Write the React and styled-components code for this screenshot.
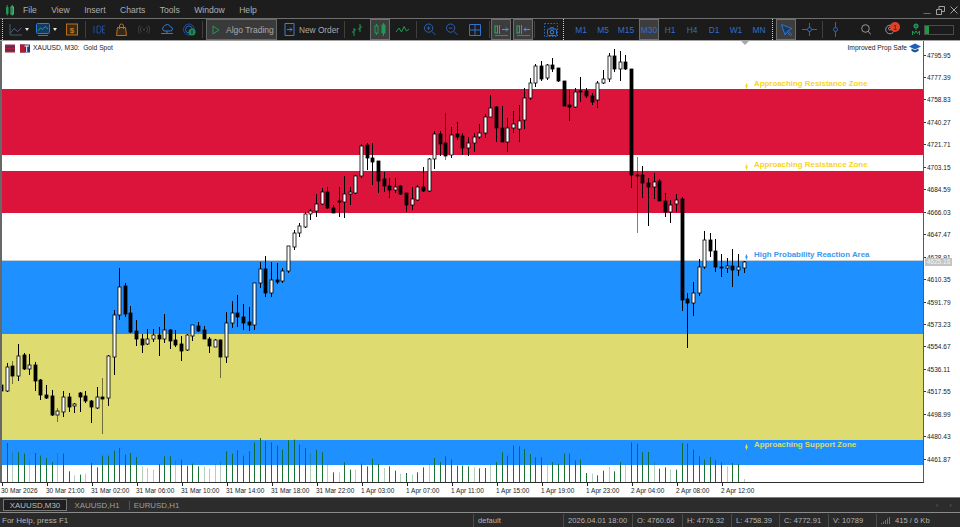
import styled, { createGlobalStyle } from 'styled-components'

const GlobalStyle = createGlobalStyle`
  html, body {
    margin: 0;
    padding: 0;
    overflow: hidden;
    background: #1d1d1d;
  }
`

const Page = styled.div`
  display: flex;
  flex-direction: column;
  width: 960px;
  height: 527px;
  overflow: hidden;
  background: #1d1d1d;
  font-family: "Liberation Sans", Arial, sans-serif;
`

/* ---- menu ---- */

const MenuBar = styled.div`
  display: flex;
  align-items: center;
  height: 18px;
  padding: 2px 0 0 5px;
  box-sizing: border-box;
  color: #aeaeae;
  font-size: 8.6px;
`

const MenuItems = styled.div`
  display: flex;
  gap: 14.4px;
  margin-left: 8px;
`

const WindowButtons = styled.div`
  display: flex;
  align-items: center;
  gap: 5px;
  margin-left: auto;
  padding-right: 2px;
`

/* ---- toolbar ---- */

const Toolbar = styled.div`
  display: flex;
  align-items: center;
  height: 21px;
  border-top: 1px solid #707070;
  border-bottom: 1px solid #a2a2a2;
  background: #1b1b1b;
`

const Slot = styled.div`
  position: relative;
  display: flex;
  flex: none;
  align-items: center;
  justify-content: center;
  box-sizing: border-box;
  width: ${p => p.$w}px;
  height: 21px;
  margin-left: ${p => p.$ml || 0}px;
  background: ${p => (p.$on ? '#3d3d3d' : 'transparent')};
  box-shadow: ${p => (p.$on ? 'inset 0 0 0 1px #6c6c6c' : 'none')};
`

const Divider = styled.div`
  flex: none;
  width: 1px;
  height: 17px;
  margin-left: ${p => p.$ml}px;
  background: #3f3f3f;
`

const Grip = styled.div`
  flex: none;
  width: 0;
  height: 21px;
  margin-left: ${p => p.$ml}px;
  border-left: 1px dotted #d0d0d0;
`

const Caret = styled.div`
  flex: none;
  width: 0;
  height: 0;
  margin-left: ${p => p.$ml}px;
  margin-right: 0;
  border-top: 3px solid #e2e2e2;
  border-left: 2.5px solid transparent;
  border-right: 2.5px solid transparent;
`

const AlgoButton = styled.div`
  display: flex;
  flex: none;
  align-items: center;
  gap: 6px;
  box-sizing: border-box;
  width: 71px;
  height: 21px;
  margin-left: 3px;
  padding-left: 6px;
  background: #3a3a3a;
  box-shadow: inset 0 0 0 1px #666;
  color: #a9a9a9;
  font-size: 8.5px;
  white-space: nowrap;
`

const OrderButton = styled.div`
  display: flex;
  flex: none;
  align-items: center;
  gap: 4px;
  width: 61px;
  margin-left: 4px;
  padding-left: 3px;
  box-sizing: border-box;
  color: #a9a9a9;
  font-size: 8.3px;
  white-space: nowrap;
`

const Period = styled(Slot)`
  color: #2f6fcf;
  font-size: 8.4px;
`

const Badge = styled.div`
  position: absolute;
  top: 3px;
  right: -3px;
  display: flex;
  align-items: center;
  justify-content: center;
  width: 10px;
  height: 10px;
  border-radius: 50%;
  background: #e0412a;
  color: #1b1b1b;
  font-size: 7px;
`

const Meter = styled.div`
  flex: none;
  box-sizing: border-box;
  width: 30px;
  height: 10px;
  margin-left: 4px;
  border: 1px solid #4b4b4b;
  background: linear-gradient(to right, #1f9a44 4px, #1b1b1b 4px);
`

/* ---- chart ---- */

const Workspace = styled.div`
  display: flex;
  height: 456px;
  background: #fff;
`

const ChartColumn = styled.div`
  display: flex;
  flex: none;
  flex-direction: column;
  width: 924px;
`

const Plot = styled.div`
  position: relative;
  display: flex;
  flex-direction: column;
  box-sizing: content-box;
  width: 921px;
  height: 441px;
  border-left: 2px solid #686868;
  border-right: 1px solid #5a5a5a;
  border-bottom: 1px solid #2e2e2e;
  overflow: hidden;
`

const Band = styled.div`
  flex: none;
  height: ${p => p.$h}px;
  background: ${p => p.$color};
`

const ChartLayer = styled.svg`
  position: absolute;
  top: 0;
  left: 0;
`

const BidLine = styled.div`
  position: absolute;
  top: 219px;
  left: 0;
  right: 0;
  height: 1px;
  background: #c6ced6;
`

const ChartInfo = styled.div`
  position: absolute;
  top: 2px;
  left: 3px;
  display: flex;
  align-items: center;
  gap: 3px;
  color: #1a1a1a;
  font-size: 6.7px;
  line-height: 10px;
  white-space: pre;
`

const PropSafe = styled.div`
  position: absolute;
  top: 2px;
  right: 2px;
  display: flex;
  align-items: center;
  gap: 2px;
  color: #1a1a1a;
  font-size: 6.7px;
  line-height: 10px;
`

const ShiftMark = styled.div`
  position: absolute;
  top: 0;
  left: 739px;
  width: 0;
  height: 0;
  border-top: 4px solid #a8a8a8;
  border-left: 4px solid transparent;
  border-right: 4px solid transparent;
`

const ZoneLabel = styled.div`
  position: absolute;
  top: ${p => p.$top}px;
  left: 742px;
  display: flex;
  align-items: center;
  gap: 5px;
  color: ${p => p.$color};
  font-size: 7.9px;
  font-weight: 700;
  line-height: 10px;
  white-space: nowrap;
`

const TimeAxis = styled.div`
  display: flex;
  height: 14px;
  padding-left: 1px;
  box-sizing: border-box;
`

const TimeLabel = styled.div`
  position: relative;
  flex: none;
  width: 45px;
  padding-top: 4px;
  color: #1a1a1a;
  font-size: 6.5px;
  line-height: 8px;
  white-space: nowrap;

  &::before {
    content: '';
    position: absolute;
    top: 0;
    left: 1px;
    width: 1px;
    height: 3px;
    background: #222;
  }
`

const PriceAxis = styled.div`
  position: relative;
  display: flex;
  flex: 1;
  flex-direction: column;
  padding-top: 2.8px;
  box-sizing: border-box;
`

const PriceRow = styled.div`
  display: flex;
  flex: none;
  align-items: center;
  gap: 1px;
  height: 22.46px;
  color: #1a1a1a;
  font-size: 6.5px;

  &::before {
    content: '';
    width: 2px;
    height: 1px;
    background: #333;
  }
`

const PriceTag = styled.div`
  position: absolute;
  top: 217px;
  left: 1px;
  width: 27px;
  height: 8px;
  background: #c3c3c3;
  color: #f4f4f4;
  font-size: 6.5px;
  line-height: 8px;
  text-align: center;
`

/* ---- bottom bars ---- */

const TabBar = styled.div`
  display: flex;
  align-items: center;
  height: 14px;
  border-top: 1px solid #7d7d7d;
  background: #2c2c2c;
  color: #9f9f9f;
  font-size: 7.9px;
`

const Tab = styled.div`
  display: flex;
  flex: none;
  align-items: center;
  justify-content: center;
  box-sizing: border-box;
  width: ${p => p.$w}px;
  height: ${p => (p.$active ? 12 : 9)}px;
  margin-left: ${p => p.$ml}px;
  background: ${p => (p.$active ? '#1e1e1e' : 'transparent')};
  border: ${p => (p.$active ? '1px solid #777' : 'none')};
  color: ${p => (p.$active ? '#bdbdbd' : '#9f9f9f')};
`

const TabSeparator = styled.div`
  flex: none;
  width: 1px;
  height: 9px;
  margin-left: 2px;
  background: #555;
`

const TabArrows = styled.div`
  display: flex;
  gap: 11px;
  margin-left: auto;
  padding-right: 8px;
  color: #5d5d5d;
  font-size: 8px;
`

const StatusBar = styled.div`
  display: flex;
  align-items: center;
  height: 14px;
  border-top: 1px solid #8a8a8a;
  background: #2a2a2a;
  color: #b4b4b4;
  font-size: 7.6px;
`

const HelpText = styled.div`
  flex: none;
  width: 471px;
  padding-left: 2px;
  font-size: 8px;
`

const StatusCell = styled.div`
  display: flex;
  flex: none;
  align-items: center;
  gap: 4px;
  box-sizing: border-box;
  width: ${p => p.$w}px;
  height: 13px;
  padding-left: 4px;
  border-left: 1px solid #4c4c4c;
  white-space: nowrap;
`

/* ---- icons ---- */

const BLUE = '#2b67bd'
const GREEN = '#1f9a55'
const ORANGE = '#b96f1d'

const Icon = ({ w = 13, h = 13, children }) => (
  <svg width={w} height={h} viewBox={`0 0 ${w} ${h}`} fill="none">
    {children}
  </svg>
)

const LineChartIcon = () => (
  <Icon>
    <path d="M1 1V12H13" stroke="#4c5a6e" />
    <path d="M1.5 10L5 5.5L8.5 8.5L12.5 5" stroke="#56637a" />
  </Icon>
)

const ProfileIcon = () => (
  <Icon w={14} h={13}>
    <rect x=".5" y=".5" width="13" height="10" rx="1" stroke="#2f7ad6" fill="#123a68" />
    <path d="M2 8L4.5 5L6.5 6.5L9 3.5L12 6" stroke="#25a05a" />
    <path d="M2 12.5H12" stroke="#2f7ad6" />
  </Icon>
)

const DollarIcon = () => (
  <Icon w={12} h={13}>
    <rect x=".5" y="1" width="11" height="11" fill="#3d2a12" stroke={ORANGE} />
    <text x="6" y="9.8" fontSize="8" fontWeight="700" fill="#c9791f" textAnchor="middle" fontFamily="Liberation Sans">$</text>
  </Icon>
)

const BagIcon = () => (
  <Icon w={11} h={13}>
    <path d="M1.5 4.5H9.5L10.5 12.5H.5Z" stroke={ORANGE} fill="#3a2812" />
    <path d="M3.5 6V3A2 2 0 0 1 7.5 3V6" stroke={ORANGE} />
  </Icon>
)

const BroadcastIcon = () => (
  <Icon>
    <circle cx="6.5" cy="6.5" r="1" fill="#4a4a4a" />
    <path d="M4 3.5A4 4 0 0 0 4 9.5M9 3.5A4 4 0 0 1 9 9.5M2 2A6.5 6.5 0 0 0 2 11M11 2A6.5 6.5 0 0 1 11 11" stroke="#484848" />
  </Icon>
)

const CloudIcon = () => (
  <Icon w={14} h={13}>
    <path d="M4 8A2.5 2.5 0 0 1 4 3.5A3.5 3.5 0 0 1 10.5 4A2 2 0 0 1 10.5 8Z" stroke="#2f7ad6" />
    <path d="M1 10.5H13M7 8V10.5" stroke="#2f7ad6" />
  </Icon>
)

const SignalsIcon = () => (
  <Icon>
    <circle cx="6" cy="6.5" r="5.5" stroke="#1d4e94" />
    <circle cx="6" cy="6.5" r="3.5" stroke="#2b67bd" />
    <circle cx="9" cy="9" r="3.5" fill="#1f8a55" />
    <path d="M9 7V11" stroke="#0c2c1c" />
  </Icon>
)

const PlayIcon = () => (
  <Icon w={8} h={10}>
    <path d="M1 1L7 5L1 9Z" stroke="#1f9a55" />
  </Icon>
)

const OrderIcon = () => (
  <Icon w={11} h={13}>
    <path d="M1 .5H10V12.5H1ZM3 6.5H8M6 4.5L8 6.5L6 8.5" stroke="#3f7fd2" />
  </Icon>
)

const BarsIcon = () => (
  <Icon>
    <path d="M3 5V13M1 9H3M3 7H5M9 1V9M7 6H9M9 4H11" stroke={GREEN} />
  </Icon>
)

const CandlesIcon = () => (
  <Icon>
    <rect x="1" y="3" width="3" height="7" stroke={GREEN} />
    <path d="M2.5 1V3M2.5 10V12" stroke={GREEN} />
    <rect x="8" y="2" width="3" height="8" stroke={GREEN} fill={GREEN} />
    <path d="M9.5 0V2M9.5 10V13" stroke={GREEN} />
  </Icon>
)

const ZigzagIcon = () => (
  <Icon h={9}>
    <path d="M0 7L3 3L5.5 7L8 1.5L10.5 6L13 4" stroke={GREEN} />
  </Icon>
)

const ZoomIcon = ({ plus }) => (
  <Icon>
    <circle cx="5" cy="5" r="4.5" stroke={BLUE} />
    <path d="M8.5 8.5L12.5 12.5M3 5H7" stroke={BLUE} />
    {plus && <path d="M5 3V7" stroke={BLUE} />}
  </Icon>
)

const GridIcon = () => (
  <Icon w={12} h={12}>
    <path d="M.5 .5H11.5V11.5H.5ZM6 .5V11.5M.5 6H11.5" stroke="#2f73cf" />
  </Icon>
)

const AutoScrollIcon = ({ back }) => (
  <Icon w={15} h={12}>
    <rect x="1" y="2" width="2.5" height="7" stroke="#25b066" />
    <path d="M5.5 1V10" stroke="#25b066" />
    <path
      d={back ? 'M14 5.5H8M10 3.5L8 5.5L10 7.5' : 'M8 5.5H14M12 3.5L14 5.5L12 7.5'}
      stroke="#4a93ea"
    />
    <path d="M1 11.5H14" stroke="#6d6d6d" />
  </Icon>
)

const CameraIcon = () => (
  <Icon w={14} h={14}>
    <path d="M.5 .5H13.5V13.5H.5Z" stroke={BLUE} strokeDasharray="1.5 1.5" />
    <rect x="3.5" y="6" width="9" height="6.5" rx="1" stroke="#2f73cf" />
    <path d="M6 6L6.8 4.5H9.2L10 6" stroke="#2f73cf" />
    <circle cx="8" cy="9.2" r="1.8" stroke="#3f86dd" />
  </Icon>
)

const CursorIcon = () => (
  <Icon>
    <path d="M1.5 1.5L12 5.5L8 7.5L11.5 11.5L10 12.5L7 8.5L5 12Z" stroke="#2f73cf" fill="#123a68" />
  </Icon>
)

const CrosshairIcon = () => (
  <Icon w={15} h={13}>
    <path d="M0 6.5H15M7.5 0V13" stroke={BLUE} />
    <circle cx="7.5" cy="6.5" r="2" fill="#1b1b1b" stroke={BLUE} />
  </Icon>
)

const VerticalIcon = () => (
  <Icon w={7} h={15}>
    <path d="M3.5 0V15" stroke={BLUE} />
    <circle cx="3.5" cy="7.5" r="2" fill="#1b1b1b" stroke={BLUE} />
  </Icon>
)

const SearchIcon = () => (
  <Icon w={10} h={11}>
    <circle cx="4.5" cy="4.5" r="3.8" stroke="#9a9a9a" />
    <path d="M7.2 7.2L9.8 10.5" stroke="#9a9a9a" />
  </Icon>
)

const ChatIcon = () => (
  <Icon w={10} h={11}>
    <circle cx="5" cy="5.5" r="4.3" stroke="#9a9a9a" />
    <circle cx="5" cy="4.5" r="1.5" stroke="#9a9a9a" />
  </Icon>
)

const VpsIcon = () => (
  <svg width="8" height="13" viewBox="0 0 8 13" fill="none">
    <circle cx="4" cy="3" r="2.5" fill="#1f9a55" />
    <circle cx="4" cy="3" r=".8" fill="#1b1b1b" />
    <path d="M4 5.5V7M.5 12V8L2.5 10.5L4 8L5.5 10.5L7.5 8V12" stroke="#1f9a55" />
  </svg>
)

const AppLogo = () => (
  <Icon w={10} h={12}>
    <rect x="1" y="3" width="2.5" height="7" fill="#1f9a55" />
    <path d="M2.2 1V11.5" stroke="#1f9a55" />
    <rect x="6" y="3" width="2.5" height="7" stroke="#34c06e" />
    <path d="M7.2 1V11.5" stroke="#34c06e" />
  </Icon>
)

const Minimize = () => (
  <Icon w={8} h={8}>
    <path d="M.5 7.5H7.5" stroke="#6d6d6d" />
  </Icon>
)

const Restore = () => (
  <Icon w={9} h={9}>
    <path d="M3 3V.5H8.5V5.5H6M.5 3.5H5.5V8.5H.5Z" stroke="#a0a0a0" />
  </Icon>
)

const Close = () => (
  <Icon w={8} h={8}>
    <path d="M.5 .5L7.5 7.5M7.5 .5L.5 7.5" stroke="#a0a0a0" />
  </Icon>
)

const FlagIcons = () => (
  <svg width="25" height="9" viewBox="0 0 25 9" style={{ flex: 'none' }}>
    <rect width="10" height="8" y=".5" fill="#b31b34" />
    <path d="M0 3H10M0 6H10" stroke="#1b3a78" strokeWidth="1.2" />
    <rect x="15" y=".5" width="10" height="8" fill="#1b3a78" />
    <rect x="15" y=".5" width="5" height="8" fill="#b31b34" />
    <path d="M19.5 2H24M21.7 2V8" stroke="#fff" />
  </svg>
)

const GradCap = () => (
  <svg width="12" height="10" viewBox="0 0 12 10">
    <path d="M6 .5L12 3.5L6 6.5L0 3.5Z" fill="#1f5fb4" />
    <path d="M2.5 5.5V8L6 9.5L9.5 8V5.5L6 7.2Z" fill="#1a4f96" />
  </svg>
)

const SignalBars = () => (
  <svg width="10" height="9" viewBox="0 0 10 9">
    <path d="M.5 8V7M2.5 8V5.5M4.5 8V4M6.5 8V2.5M8.5 8V1" stroke="#1fa65a" />
  </svg>
)

const ZoneArrow = ({ color }) => (
  <svg width="5" height="6" viewBox="0 0 5 6" style={{ marginTop: 4 }}>
    <path d="M2.5 .5V5.5M1 3H4" stroke={color} strokeWidth="1.2" />
  </svg>
)

/* ---- data, in screen pixels read off the picture ---- */

const BANDS = [
  [48, '#ffffff'],
  [66, '#dc143c'],
  [16, '#ffffff'],
  [42, '#dc143c'],
  [48, '#ffffff'],
  [73, '#1e90ff'],
  [106, '#dedb70'],
  [25, '#1e90ff'],
  [17, '#ffffff'],
]

// wick top, body top, body bottom, wick bottom, 1 = white candle
const CANDLES = [
  [385, 385, 391, 391, 0], [363, 367, 391, 392, 1], [361, 366, 376, 384, 0], [344, 356, 376, 381, 1],
  [353, 355, 369, 370, 0], [354, 365, 369, 375, 1], [362, 365, 381, 391, 0], [379, 380, 395, 400, 0],
  [385, 395, 398, 399, 0], [390, 396, 415, 416, 0], [408, 411, 415, 422, 1], [391, 397, 412, 417, 1],
  [393, 397, 407, 412, 0], [403, 404, 406, 413, 1], [392, 393, 397, 412, 0], [391, 396, 401, 403, 0],
  [400, 401, 407, 423, 0], [387, 397, 408, 409, 1], [378, 397, 399, 434, 0], [355, 356, 398, 406, 1],
  [310, 315, 357, 375, 1], [268, 287, 315, 320, 1], [283, 286, 314, 317, 0], [306, 313, 332, 333, 0],
  [320, 331, 339, 346, 0], [334, 339, 345, 353, 0], [329, 339, 344, 345, 1], [329, 335, 339, 342, 1],
  [327, 335, 339, 356, 0], [314, 330, 339, 343, 1], [329, 330, 341, 349, 0], [330, 340, 345, 347, 0],
  [336, 344, 351, 361, 0], [334, 335, 350, 351, 1], [325, 325, 336, 341, 1], [322, 326, 331, 332, 0],
  [326, 330, 339, 339, 0], [337, 339, 346, 353, 0], [339, 340, 347, 347, 1], [339, 340, 357, 378, 0],
  [312, 323, 357, 363, 1], [301, 313, 323, 328, 1], [295, 313, 317, 327, 0], [304, 317, 323, 330, 0],
  [307, 322, 325, 331, 0], [283, 283, 325, 330, 1], [262, 269, 283, 288, 1], [256, 269, 293, 297, 0],
  [262, 280, 293, 297, 1], [263, 280, 282, 284, 0], [268, 271, 281, 283, 1], [246, 246, 271, 273, 1],
  [230, 233, 247, 250, 1], [223, 226, 233, 237, 1], [212, 214, 227, 228, 1], [209, 211, 214, 220, 1],
  [194, 204, 211, 217, 1], [188, 192, 204, 205, 1], [187, 192, 208, 209, 0], [205, 208, 213, 213, 0],
  [187, 201, 202, 217, 0], [176, 194, 202, 218, 1], [187, 192, 194, 205, 1], [175, 176, 193, 194, 1],
  [144, 146, 176, 178, 1], [143, 145, 158, 170, 0], [143, 158, 162, 185, 0], [161, 161, 181, 193, 0],
  [172, 179, 186, 192, 0], [178, 186, 190, 198, 0], [178, 187, 190, 193, 1], [185, 186, 194, 195, 0],
  [193, 193, 205, 212, 0], [187, 199, 205, 210, 1], [185, 187, 200, 201, 1], [167, 187, 191, 192, 0],
  [158, 159, 191, 192, 1], [131, 134, 159, 169, 1], [131, 134, 144, 156, 0], [113, 143, 156, 160, 0],
  [127, 135, 155, 158, 1], [122, 134, 137, 140, 0], [133, 136, 148, 155, 0], [137, 143, 148, 156, 1],
  [133, 137, 143, 152, 1], [124, 133, 137, 139, 1], [114, 117, 133, 138, 1], [95, 108, 117, 117, 1],
  [106, 107, 128, 142, 0], [106, 128, 142, 142, 0], [118, 128, 142, 152, 1], [111, 124, 128, 133, 1],
  [105, 121, 129, 142, 1], [88, 98, 120, 129, 1], [78, 83, 98, 100, 1], [64, 66, 83, 87, 1],
  [61, 66, 79, 81, 0], [64, 65, 78, 80, 1], [58, 65, 69, 72, 0], [68, 68, 81, 82, 0],
  [81, 81, 106, 106, 0], [90, 105, 107, 121, 0], [88, 92, 107, 108, 1], [77, 91, 92, 102, 0],
  [88, 91, 96, 98, 0], [93, 96, 102, 105, 0], [81, 83, 100, 108, 1], [70, 79, 83, 84, 1],
  [53, 56, 79, 82, 1], [49, 56, 69, 72, 0], [51, 62, 69, 81, 1], [55, 62, 69, 70, 0],
  [69, 69, 175, 188, 0], [157, 175, 176, 233, 0], [166, 175, 183, 198, 0], [178, 183, 187, 226, 0],
  [173, 182, 187, 199, 1], [179, 181, 201, 201, 0], [193, 201, 212, 217, 0], [200, 205, 212, 223, 1],
  [194, 200, 204, 212, 1], [197, 199, 300, 311, 0], [293, 299, 303, 348, 0], [282, 293, 303, 316, 1],
  [259, 267, 293, 296, 1], [231, 240, 267, 269, 1], [233, 240, 251, 257, 0], [239, 251, 267, 272, 0],
  [254, 267, 268, 277, 0], [258, 266, 268, 273, 1], [249, 266, 270, 287, 0], [254, 267, 270, 276, 1],
  [261, 262, 268, 273, 1],
]

// volume bar heights, in thirds of a pixel
const VOLUMES = [
  52, 117, 92, 89, 85, 65, 87, 79, 72, 60, 87, 85, 32, 20, 22, 25, 57, 44, 79, 79, 94, 102, 82, 87, 75, 47, 42, 37, 54,
  77, 77, 65, 67, 49, 55, 47, 47, 40, 55, 62, 92, 85, 95, 79, 92, 119, 132, 122, 119, 109, 97, 125, 127, 112, 102, 87,
  97, 89, 52, 29, 29, 60, 37, 37, 55, 47, 70, 54, 42, 47, 34, 25, 27, 22, 29, 44, 52, 72, 60, 77, 67, 49, 49, 47, 44,
  41, 42, 52, 60, 89, 79, 109, 107, 99, 84, 74, 74, 52, 60, 55, 85, 85, 65, 67, 27, 25, 20, 34, 45, 32, 60, 52, 119,
  115, 89, 90, 60, 40, 44, 37, 37, 117, 115, 97, 77, 67, 75, 65, 59, 47, 57, 54, 9,
]

const PALE = new Set([
  2, 5, 10, 13, 15, 25, 26, 27, 31, 36, 37, 38, 39, 55, 58, 60, 63, 68, 71, 73, 76, 84, 87, 97, 105, 108, 111, 116, 119,
  129, 132,
])

const FADED = new Set([2, 10, 18, 39, 79, 113])

const PRICES = [
  '4795.95', '4777.39', '4758.83', '4740.27', '4721.71', '4703.15', '4684.59', '4666.03', '4647.47', '4628.91',
  '4610.35', '4591.79', '4573.23', '4554.67', '4536.11', '4517.55', '4498.99', '4480.43', '4461.87',
]

const TIMES = [
  '30 Mar 2026', '30 Mar 21:00', '31 Mar 02:00', '31 Mar 06:00', '31 Mar 10:00', '31 Mar 14:00', '31 Mar 18:00',
  '31 Mar 22:00', '1 Apr 03:00', '1 Apr 07:00', '1 Apr 11:00', '1 Apr 15:00', '1 Apr 19:00', '1 Apr 23:00',
  '2 Apr 04:00', '2 Apr 08:00', '2 Apr 12:00',
]

const MENU = ['File', 'View', 'Insert', 'Charts', 'Tools', 'Window', 'Help']

const PERIODS = [
  ['M1', 22], ['M5', 22], ['M15', 24], ['M30', 20, 1, true], ['H1', 22], ['H4', 22], ['D1', 22], ['W1', 22], ['MN', 24],
]

// snapped to whole pixels so the thin lines stay crisp
const candleX = i => Math.floor(1.5 + i * 5.625) + 0.5

const CandleChart = () => (
  <ChartLayer width="921" height="441" viewBox="2 41 921 441">
    {VOLUMES.map((v, i) => (
      <line
        key={i}
        x1={candleX(i)}
        x2={candleX(i)}
        y1={482}
        y2={482 - v / 3}
        stroke="#0b6b2a"
        strokeOpacity={PALE.has(i) ? 0.32 : 0.95}
      />
    ))}
    {CANDLES.map(([wt, bt, bb, wb, up], i) => {
      const x = candleX(i)
      return (
        <g key={i}>
          <line x1={x} x2={x} y1={wt} y2={wb} stroke="#000" strokeOpacity={FADED.has(i) ? 0.5 : 1} />
          <rect
            x={x - 1.5}
            y={bt}
            width="3"
            height={Math.max(bb - bt, 0.8)}
            fill={up ? '#fff' : '#000'}
            stroke="#000"
            strokeWidth="0.8"
          />
        </g>
      )
    })}
  </ChartLayer>
)

const App = () => (
  <Page>
    <GlobalStyle />
    <MenuBar>
      <AppLogo />
      <MenuItems>
        {MENU.map(item => (
          <span key={item}>{item}</span>
        ))}
      </MenuItems>
      <WindowButtons>
        <Minimize />
        <Restore />
        <Close />
      </WindowButtons>
    </MenuBar>

    <Toolbar>
      <Grip $ml={2} />
      <Slot $w={13} $ml={6}><LineChartIcon /></Slot>
      <Caret $ml={3} />
      <Slot $w={14} $ml={7}><ProfileIcon /></Slot>
      <Caret $ml={3} />
      <Slot $w={12} $ml={9}><DollarIcon /></Slot>
      <Divider $ml={7} />
      <Slot $w={12} $ml={7}>
        <svg width="12" height="9" viewBox="0 0 12 9">
          <path d="M1 1V8M4 1V8H6.5Q8 8 8 4.5T6.5 1H4M12 1H9.5V8H12M9.5 4.5H11.5" stroke="#1f4f9a" fill="none" />
        </svg>
      </Slot>
      <Slot $w={11} $ml={11}><BagIcon /></Slot>
      <Slot $w={12} $ml={11}><BroadcastIcon /></Slot>
      <Slot $w={14} $ml={10}><CloudIcon /></Slot>
      <Slot $w={13} $ml={9}><SignalsIcon /></Slot>
      <Divider $ml={6} />
      <AlgoButton>
        <PlayIcon />
        Algo Trading
      </AlgoButton>
      <OrderButton>
        <OrderIcon />
        New Order
      </OrderButton>
      <Divider $ml={2} />
      <Slot $w={13} $ml={6}><BarsIcon /></Slot>
      <Slot $w={20} $ml={6} $on><CandlesIcon /></Slot>
      <Slot $w={13} $ml={6}><ZigzagIcon /></Slot>
      <Divider $ml={7} />
      <Slot $w={12} $ml={7}><ZoomIcon plus /></Slot>
      <Slot $w={12} $ml={10}><ZoomIcon /></Slot>
      <Slot $w={12} $ml={11}><GridIcon /></Slot>
      <Divider $ml={8} />
      <Slot $w={20} $ml={1} $on><AutoScrollIcon /></Slot>
      <Slot $w={20} $ml={2} $on><AutoScrollIcon back /></Slot>
      <Divider $ml={1} />
      <Slot $w={14} $ml={9}><CameraIcon /></Slot>
      <Grip $ml={5} />
      <Slot $w={0} $ml={6} />
      {PERIODS.map(([name, w, ml, on]) => (
        <Period key={name} $w={w} $ml={ml} $on={on}>
          {name}
        </Period>
      ))}
      <Grip $ml={1} />
      <Slot $w={20} $ml={3} $on><CursorIcon /></Slot>
      <Slot $w={15} $ml={6}><CrosshairIcon /></Slot>
      <Divider $ml={5} />
      <Slot $w={8} $ml={8}><VerticalIcon /></Slot>
      <Slot $w={10} $ml={22}><SearchIcon /></Slot>
      <Slot $w={14} $ml={12}>
        <ChatIcon />
        <Badge>1</Badge>
      </Slot>
      <Slot $w={8} $ml={15}><VpsIcon /></Slot>
      <Meter />
    </Toolbar>

    <Workspace>
      <ChartColumn>
        <Plot>
          {BANDS.map(([h, color], i) => (
            <Band key={i} $h={h} $color={color} />
          ))}
          <BidLine />
          <CandleChart />
          <ChartInfo>
            <FlagIcons />
            <span>XAUUSD, M30:  Gold Spot</span>
          </ChartInfo>
          <PropSafe>
            Improved Prop Safe
            <GradCap />
          </PropSafe>
          <ShiftMark />
          <ZoneLabel $top={38} $color="#f9d423">
            <ZoneArrow color="#f9d423" />
            Approaching Resistance Zone
          </ZoneLabel>
          <ZoneLabel $top={119} $color="#f9d423">
            <ZoneArrow color="#f9d423" />
            Approaching Resistance Zone
          </ZoneLabel>
          <ZoneLabel $top={209} $color="#3b97f0">
            <ZoneArrow color="#3b97f0" />
            High Probability Reaction Area
          </ZoneLabel>
          <ZoneLabel $top={399} $color="#dedb70">
            <ZoneArrow color="#dedb70" />
            Approaching Support Zone
          </ZoneLabel>
        </Plot>
        <TimeAxis>
          {TIMES.map(t => (
            <TimeLabel key={t}>{t}</TimeLabel>
          ))}
        </TimeAxis>
      </ChartColumn>
      <PriceAxis>
        {PRICES.map(p => (
          <PriceRow key={p}>{p}</PriceRow>
        ))}
        <PriceTag>4625.16</PriceTag>
      </PriceAxis>
    </Workspace>

    <TabBar>
      <Tab $w={64} $ml={3} $active>XAUUSD,M30</Tab>
      <Tab $w={60} $ml={0}>XAUUSD,H1</Tab>
      <TabSeparator />
      <Tab $w={53} $ml={0}>EURUSD,H1</Tab>
      <TabArrows>
        <span>‹</span>
        <span>›</span>
      </TabArrows>
    </TabBar>

    <StatusBar>
      <HelpText>For Help, press F1</HelpText>
      <StatusCell $w={90}>default</StatusCell>
      <StatusCell $w={69}>2026.04.01 18:00</StatusCell>
      <StatusCell $w={50}>O: 4760.66</StatusCell>
      <StatusCell $w={49}>H: 4776.32</StatusCell>
      <StatusCell $w={48}>L: 4758.39</StatusCell>
      <StatusCell $w={49}>C: 4772.91</StatusCell>
      <StatusCell $w={48}>V: 10789</StatusCell>
      <StatusCell $w={84}>
        <SignalBars />
        415 / 6 Kb
      </StatusCell>
    </StatusBar>
  </Page>
)

export default App
